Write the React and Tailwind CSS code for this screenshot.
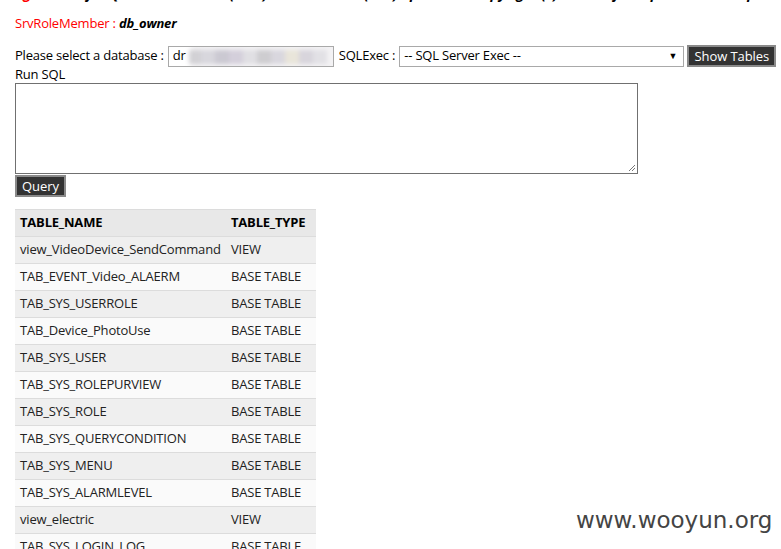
import React from "react";

const rows = [
  ["view_VideoDevice_SendCommand", "VIEW"],
  ["TAB_EVENT_Video_ALAERM", "BASE TABLE"],
  ["TAB_SYS_USERROLE", "BASE TABLE"],
  ["TAB_Device_PhotoUse", "BASE TABLE"],
  ["TAB_SYS_USER", "BASE TABLE"],
  ["TAB_SYS_ROLEPURVIEW", "BASE TABLE"],
  ["TAB_SYS_ROLE", "BASE TABLE"],
  ["TAB_SYS_QUERYCONDITION", "BASE TABLE"],
  ["TAB_SYS_MENU", "BASE TABLE"],
  ["TAB_SYS_ALARMLEVEL", "BASE TABLE"],
  ["view_electric", "VIEW"],
  ["TAB_SYS_LOGIN_LOG", "BASE TABLE"],
];

export default function App() {
  return (
    <div
      className="relative w-[781px] h-[549px] overflow-hidden bg-white text-[13px] text-black"
      style={{ fontFamily: '"Open Sans", "Noto Sans", sans-serif' }}
    >
      <div className="pl-[15px] h-[4px] overflow-hidden relative">
        <div className="absolute left-[15px] top-[-15px] whitespace-nowrap text-[14px] font-bold italic leading-[18px]">
          <span className="text-[#ff0000]">Vg</span>
          <span> Microsoft SQL Server 2008 R2 (RTM) - 10.50.1600.1 (X64) Apr  2 2010 Copyright (c) Microsoft Corporation Enterprise</span>
        </div>
      </div>
      <div className="pl-[15px] pt-[11px] h-[26px] leading-[16px] tracking-[-0.2px]">
        <span className="text-[#ff0000]">SrvRoleMember : </span>
        <span className="font-bold italic">db_owner</span>
      </div>
      <div className="pl-[15px] mt-[15px] flex items-center h-[22px] tracking-[-0.2px]">
        <span className="mr-[4px]">Please select a database :</span>
        <div className="relative w-[166px] h-[21px] border border-[#a9a9a9] flex items-center pl-[4px] overflow-hidden">
          <span>dr</span>
          <div className="absolute left-[20px] top-[-4px] w-[160px] h-[28px] rounded-[10px] bg-[#f3f2f4] blur-[2px] flex items-center gap-0 overflow-hidden">
            <div className="w-[12px] h-[14px] bg-[#d2d1d5]" />
            <div className="w-[14px] h-[14px] bg-[#d8d7dd]" />
            <div className="w-[14px] h-[14px] bg-[#cbc9d2]" />
            <div className="w-[14px] h-[14px] bg-[#d4cfdb]" />
            <div className="w-[14px] h-[14px] bg-[#e0dfe3]" />
            <div className="w-[14px] h-[14px] bg-[#cecdd0]" />
            <div className="w-[14px] h-[14px] bg-[#d9d7de]" />
            <div className="w-[14px] h-[14px] bg-[#e9e5da]" />
            <div className="w-[14px] h-[14px] bg-[#d8d5dc]" />
            <div className="w-[14px] h-[14px] bg-[#e2e1e5]" />
          </div>
        </div>
        <span className="ml-[5px] mr-[4px]">SQLExec :</span>
        <div className="w-[285px] h-[21px] border border-[#a9a9a9] flex items-center justify-between pl-[4px] pr-[6px]">
          <span>-- SQL Server Exec --</span>
          <span className="text-[9px]">▼</span>
        </div>
        <button className="ml-[3px] h-[22px] w-[89px] bg-[#333333] text-white border-2 border-[#8a8a8a] text-[13px] leading-[16px] tracking-[-0.1px]">
          Show Tables
        </button>
      </div>
      <div className="pl-[15px] mt-[-2px] leading-[18px] tracking-[-0.2px]">Run SQL</div>
      <div className="pl-[15px]">
        <div className="relative w-[623px] h-[91px] border border-[#707070]">
          <svg className="absolute right-[1px] bottom-[1px]" width="8" height="8" viewBox="0 0 8 8">
            <path d="M7 1 L1 7 M7 4 L4 7" stroke="#777" strokeWidth="1" />
          </svg>
        </div>
      </div>
      <div className="pl-[15px] mt-[1px]">
        <button className="h-[22px] w-[51px] bg-[#333333] text-white border-2 border-[#8a8a8a] text-[13px] leading-[16px]">
          Query
        </button>
      </div>
      <div className="pl-[15px] mt-[12px]">
        <div className="w-[301px] tracking-[-0.2px]">
          <div className="flex h-[27px] items-center bg-[#e8e8e8] font-bold border-t border-[#dcdcdc]">
            <div className="pl-[5px] w-[211px]">TABLE_NAME</div>
            <div className="pl-[5px]">TABLE_TYPE</div>
          </div>
          {rows.map((r, i) => (
            <div
              key={i}
              className={
                "flex h-[27px] items-center border-t border-[#dcdcdc] " +
                (i % 2 === 0 ? "bg-[#efefef]" : "bg-[#fafafa]")
              }
            >
              <div className="pl-[5px] w-[211px] text-[#222]">{r[0]}</div>
              <div className="pl-[5px] text-[#222]">{r[1]}</div>
            </div>
          ))}
        </div>
      </div>
      <div
        className="absolute left-[576px] top-[505px] text-[23px] text-[#444444] leading-[30px]"
        style={{ fontFamily: '"DejaVu Sans", Verdana, sans-serif' }}
      >
        www.wooyun.org
      </div>
    </div>
  );
}
